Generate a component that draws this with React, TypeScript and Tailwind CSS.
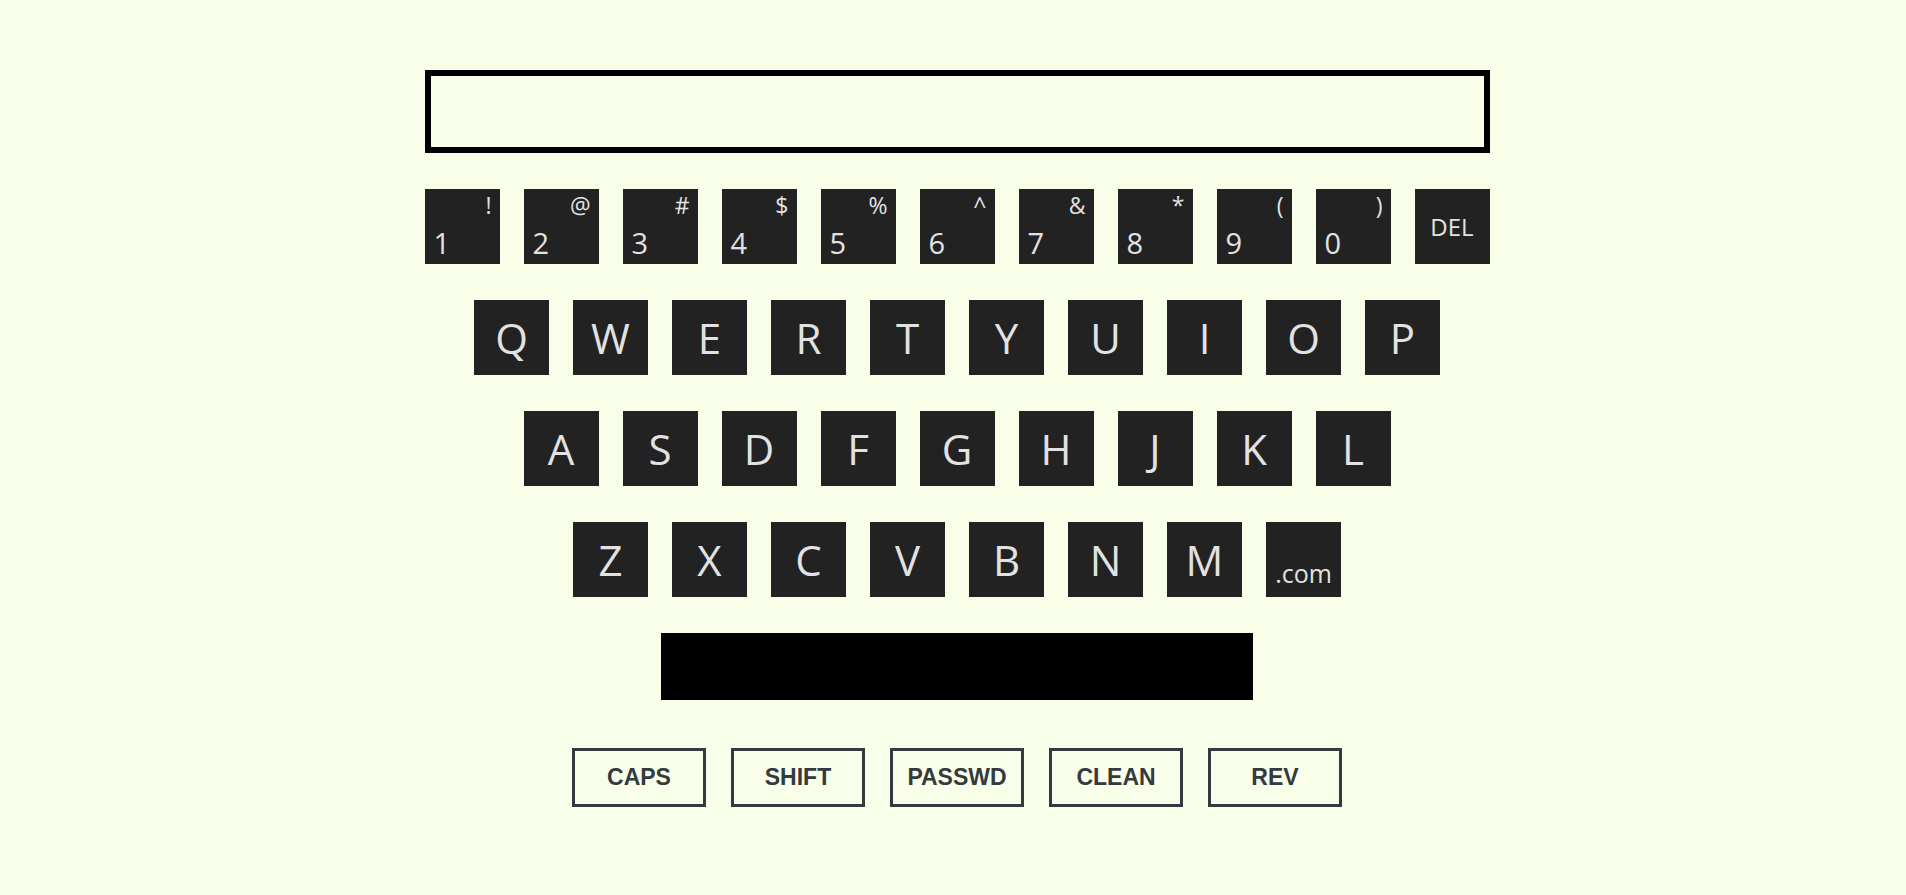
import React from 'react';

const numberKeys = [
  { n: '1', s: '!' },
  { n: '2', s: '@' },
  { n: '3', s: '#' },
  { n: '4', s: '$' },
  { n: '5', s: '%' },
  { n: '6', s: '^' },
  { n: '7', s: '&' },
  { n: '8', s: '*' },
  { n: '9', s: '(' },
  { n: '0', s: ')' },
];

const letterRows = [
  ['Q', 'W', 'E', 'R', 'T', 'Y', 'U', 'I', 'O', 'P'],
  ['A', 'S', 'D', 'F', 'G', 'H', 'J', 'K', 'L'],
  ['Z', 'X', 'C', 'V', 'B', 'N', 'M'],
];

const controls = ['CAPS', 'SHIFT', 'PASSWD', 'CLEAN', 'REV'];

const keyBase = 'relative w-[75px] h-[75px] bg-[#222222] text-[#e2e2e2] shrink-0';

export default function App() {
  return (
    <div
      className="min-h-screen w-full bg-[#f8fee8] pl-[8px] pt-[70px] flex flex-col items-center"
      style={{ fontFamily: '"Open Sans", "Noto Sans", sans-serif' }}
    >
      {/* Display */}
      <div className="w-[1065px] h-[83px] border-[6px] border-black bg-[#f8fee8]" />

      {/* Keys */}
      <div className="mt-[36px] flex flex-col items-center gap-[36px]">
        <div className="flex gap-[24px]">
          {numberKeys.map(k => (
            <div key={k.n} className={keyBase}>
              <span className="absolute left-[9px] bottom-[7px] text-[29px] leading-none">{k.n}</span>
              <span className="absolute right-[8px] top-[5px] text-[23px] leading-none">{k.s}</span>
            </div>
          ))}
          <div className={`${keyBase} flex items-center justify-center text-[24px]`}>DEL</div>
        </div>

        {letterRows.map((row, i) => (
          <div key={i} className="flex gap-[24px]">
            {row.map(l => (
              <div key={l} className={`${keyBase} flex items-center justify-center text-[42px] leading-none`}>
                {l}
              </div>
            ))}
            {i === 2 && (
              <div className={`${keyBase} flex items-end justify-center pb-[5px] text-[25px]`}>.com</div>
            )}
          </div>
        ))}

        {/* Space bar */}
        <div className="w-[592px] h-[67px] bg-black" />
      </div>

      {/* Control buttons */}
      <div className="mt-[48px] flex gap-[25px]">
        {controls.map(c => (
          <button
            key={c}
            type="button"
            className="w-[134px] h-[59px] border-[3px] border-[#343a40] text-[#343a40] text-[23px] font-bold bg-transparent"
            style={{ fontFamily: '"Liberation Sans", Arial, sans-serif' }}
          >
            {c}
          </button>
        ))}
      </div>
    </div>
  );
}
